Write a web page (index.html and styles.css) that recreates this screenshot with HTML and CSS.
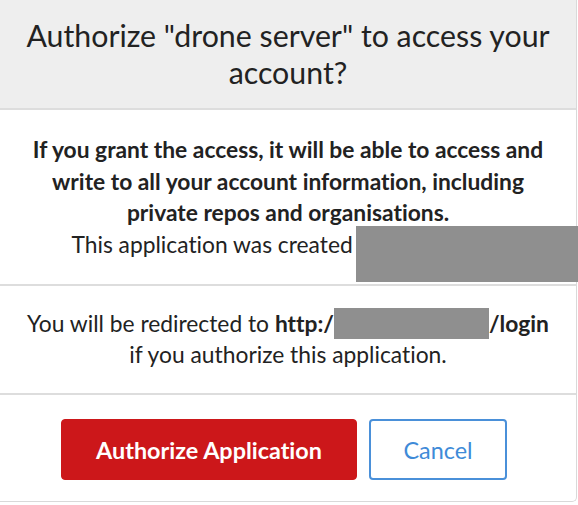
FILE: index.html
```html
<!DOCTYPE html>
<html>
<head>
<meta charset="utf-8">
<link rel="stylesheet" href="styles.css">
</head>
<body>
<div class="modal">
  <div class="header">Authorize "drone server" to access your account?</div>
  <div class="section intro">
    <p class="warn">If you grant the access, it will be able to access and write to all your account information, including private repos and organisations.</p>
    <p class="created">This application was created <span class="hidden-by"></span></p>
    <div class="redact redact-owner"></div>
  </div>
  <div class="section redirect">
    <p>You will be redirected to <b>http:/<span class="redact-inline"></span>/login</b><br>if you authorize this application.</p>
  </div>
  <div class="section actions">
    <button class="btn btn-primary">Authorize Application</button>
    <button class="btn btn-cancel">Cancel</button>
  </div>
</div>
</body>
</html>
```

FILE: styles.css
```css
html, body {
  margin: 0;
  padding: 0;
  background: #ffffff;
}
body {
  font-family: Lato, "Open Sans", sans-serif;
  font-variant-ligatures: no-common-ligatures;
  color: #222222;
  overflow: hidden;
}
.modal {
  width: 576px;
  border-right: 1px solid #d9d9d9;
  border-bottom: 1px solid #d9d9d9;
  border-bottom-right-radius: 5px;
  background: #ffffff;
}
.header {
  background: #eeeeee;
  font-size: 30.3px;
  line-height: 37px;
  text-align: center;
  padding: 17px 10px 17px;
  border-bottom: 2px solid #dddddd;
  color: #222222;
}
.section {
  text-align: center;
}
.section p {
  margin: 0;
}
.intro {
  position: relative;
  padding: 24px 20px 24px;
  font-size: 22.8px;
  line-height: 31.5px;
}
.warn {
  font-weight: 700;
}
.hidden-by {
  display: inline-block;
  width: 146px;
}
.redact {
  position: absolute;
  background: #8f8f8f;
}
.redact-owner {
  left: 356px;
  right: -10px;
  top: 116px;
  height: 56px;
}
.redirect {
  border-top: 2px solid #dddddd;
  padding: 22px 10px 23px;
  font-size: 22.8px;
  line-height: 31px;
}
.redirect b {
  font-weight: 700;
}
.redact-inline {
  display: inline-block;
  width: 155px;
  height: 31px;
  background: #8f8f8f;
  vertical-align: -7px;
}
.actions {
  border-top: 2px solid #dddddd;
  padding: 24px 0 21px;
  display: flex;
  justify-content: center;
  gap: 12px;
  padding-right: 8px;
}
.btn {
  font-family: Lato, "Open Sans", sans-serif;
  font-variant-ligatures: no-common-ligatures;
  font-size: 23.4px;
  height: 61px;
  border-radius: 4px;
  cursor: pointer;
  padding: 0;
}
.btn-primary {
  width: 296px;
  background: #cc171a;
  border: 1px solid #cc171a;
  color: #ffffff;
  font-weight: 700;
}
.btn-cancel {
  width: 138px;
  background: #ffffff;
  border: 2px solid #4a90d9;
  color: #3f8bd8;
  font-weight: 400;
}
```
